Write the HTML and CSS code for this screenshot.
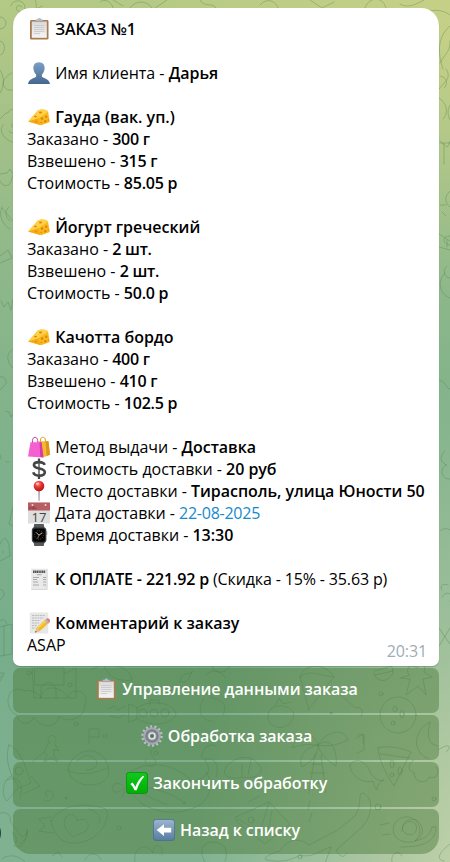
FILE: index.html
```html
<!DOCTYPE html>
<html lang="ru">
<head>
<meta charset="utf-8">
<title>Заказ №1</title>
<link rel="stylesheet" href="styles.css">
</head>
<body>
<svg class="defs" width="0" height="0" aria-hidden="true">
  <defs>
    <linearGradient id="gPaper" x1="0" y1="0" x2="0" y2="1"><stop offset="0" stop-color="#dadada"/><stop offset="1" stop-color="#f4f4f4"/></linearGradient>
    <linearGradient id="gUser" x1="0" y1="0" x2="0" y2="1"><stop offset="0" stop-color="#7ba0c4"/><stop offset="1" stop-color="#446790"/></linearGradient>
    <linearGradient id="gArrow" x1="0" y1="0" x2="0" y2="1"><stop offset="0" stop-color="#9db6cf"/><stop offset="1" stop-color="#577ba1"/></linearGradient>
    <linearGradient id="gCheck" x1="0" y1="0" x2="0" y2="1"><stop offset="0" stop-color="#10c91c"/><stop offset="1" stop-color="#00ae06"/></linearGradient>
    <radialGradient id="gPin" cx=".4" cy=".3" r=".7"><stop offset="0" stop-color="#ff8a80"/><stop offset=".5" stop-color="#e8322f"/><stop offset="1" stop-color="#b81414"/></radialGradient>
  </defs>
  <symbol id="clipboard" viewBox="0 0 22 22">
    <rect x="2" y="2" width="18.5" height="19.6" rx="1.4" fill="#a97c50"/>
    <path d="M3.8 3.5h15v16.300h-15z" fill="url(#gPaper)"/>
    <path d="M7 3.600l1-1.800h1.700a1.600 1.600 0 0 1 3.200 0h1.700l1 1.800z" fill="#b4bcc4" stroke="#8d969e" stroke-width=".4"/>
    <path d="M6 7.500h10.500M6 9.500h10.500M6 11.500h10.500M6 13.500h10.500M6 15.500h6" stroke="#c0c0c0" stroke-width=".7"/>
  </symbol>
  <symbol id="user" viewBox="0 0 22 22">
    <path d="M11 .3c4 0 5.800 2.800 5.600 6.200-.1 2.600-1.400 4.700-2.700 6v2.300c1.600 1.300 7.300 2 8.100 7.200H0c.8-5.200 6.500-5.900 8.100-7.200v-2.300C6.800 11.200 5.500 9.100 5.400 6.500 5.200 3.100 7 .3 11 .3z" fill="url(#gUser)"/>
  </symbol>
  <symbol id="cheese" viewBox="0 0 22 22">
    <path d="M.2 15.600 9.800 4.600c3-1.600 8.200-1.700 10.300 1.200l1.700 10.300-8.600 3.200z" fill="#f9b91c"/>
    <path d="M.2 15.600 9.800 4.600c3-1.600 8.200-1.700 10.300 1.200L10 12.500z" fill="#ffd048"/>
    <path d="M.2 15.600 10 12.500l2.200 6.600z" fill="#f6a912"/>
    <g fill="#dc850d"><ellipse cx="12.500" cy="6.500" rx="1.600" ry="1"/><ellipse cx="7.500" cy="10.600" rx="1.500" ry=".8"/><circle cx="14" cy="12.600" r="1.300"/><circle cx="18.200" cy="10.800" r="1.200"/><circle cx="17.300" cy="15.300" r="1.200"/><circle cx="20.300" cy="14" r=".7"/><circle cx="13.300" cy="16.500" r=".8"/><circle cx="8" cy="15.500" r=".8"/></g>
  </symbol>
  <symbol id="bags" viewBox="0 0 22 22">
    <path d="M12.500 8V4c0-3.600 4.500-3.600 5 0l.8 4" fill="none" stroke="#d9a01c" stroke-width="1"/>
    <path d="M10.500 5.200h10l1.500 13.500-5 2-6-1z" fill="#f5b92e"/><path d="M20.500 5.200 22 18.700l-3.300 1.400-1.200-14.900z" fill="#d9961b"/>
    <path d="M4.500 8V4.500C4.500.3 9.500.3 9.700 4.500V8" fill="none" stroke="#c43fa8" stroke-width="1"/>
    <path d="M2.500 6.200h11l2 15.200L0 20.500z" fill="#f65fd0"/><path d="m11.500 6.200 2 0 2 15.200-3.200-.3z" fill="#d53aa9"/>
  </symbol>
  <symbol id="dollar" viewBox="0 0 22 22">
    <path d="M11 .5v4M11 17.500V21" fill="none" stroke="#454545" stroke-width="2.300"/>
    <path d="M16.700 6.900C16 4.900 14 4.100 11 4.100c-3.200 0-5.100 1.100-5.100 3 0 4.700 10.900 2.300 10.900 7.100 0 2.200-2.200 3.400-5.600 3.400-3.200 0-5.400-1-5.900-3.300" fill="none" stroke="#454545" stroke-width="2.600"/>
    <path d="M11 4v14" stroke="#454545" stroke-width="1.300"/>
  </symbol>
  <symbol id="pin" viewBox="0 0 22 22">
    <path d="M10.300 9h1.500l-.3 12h-.9z" fill="#8d9298"/><circle cx="11" cy="6" r="5.300" fill="url(#gPin)"/><ellipse cx="9.500" cy="3.800" rx="1.700" ry="1.100" fill="#ffc1b8"/>
  </symbol>
  <symbol id="watch" viewBox="0 0 22 22">
    <path d="M6.300 0h9.400l1 5H5.300zM5.300 17h11.400l-1 5H6.300z" fill="#55595c"/>
    <rect x="3.800" y="3.300" width="14.600" height="15.600" rx="3.400" fill="#3c3f42"/><rect x="5" y="4.500" width="12.200" height="13.200" rx="2" fill="#050505"/>
    <circle cx="11" cy="11" r="4.300" fill="none" stroke="#777" stroke-width="1" stroke-dasharray=".6 1.600"/>
    <path d="m8.300 8.700 2.700 2.500 3.200-2.400" fill="none" stroke="#eee" stroke-width=".8"/><path d="m11 11.200-1.500 3.300" stroke="#f29232" stroke-width=".7"/><path d="M18.300 7.500h.9v3.500h-.9z" fill="#777"/>
  </symbol>
  <symbol id="receipt" viewBox="0 0 22 22">
    <path d="M3.200.700h16.300v20.800H3.200z" fill="#e9e9e9"/><path d="M19 1v20.500H3.200" fill="none" stroke="#d0d0d0" stroke-width=".8"/>
    <path d="M5 3.700h12.500" stroke="#555" stroke-width="2.400" stroke-dasharray="1.400 .4"/>
    <path d="M9 6.700h4.500M5 9.500h6M15 9.500h3M5 11.500h4M15 11.500h3M5 14h5M15 14h3M5 17h6M15 17h3" stroke="#999" stroke-width=".8"/>
  </symbol>
  <symbol id="memo" viewBox="0 0 22 22">
    <path d="M1.800.500h18.500v21H1.800z" fill="#e7e7e7"/>
    <path d="M4 3.500h13M4 6h11.500M4 8.500h8M4 11h7M4 13.500h5M4 16h3.500" stroke="#aaa" stroke-width=".7" stroke-dasharray="2 .7"/>
    <path d="m7.200 20.600 1.400-4.900 9.500-8.600 3 3.600-9.200 8.300z" fill="#f4ba29"/><path d="m7.200 20.600 1.400-4.900 3.300 3.300z" fill="#dfc495"/><path d="m7.200 20.600.5-1.700 1.200 1.200z" fill="#333"/>
    <path d="m16.700 8.400 1.400-1.300 3 3.600-1.400 1.200z" fill="#aeb7bd"/><path d="m18.100 7.100 1-.8c1.800-.4 3.700 1.700 2.900 3.500l-.9.900z" fill="#e9767e"/>
    <path d="m9.400 16.400 8.500-7.500" stroke="#ffe078" stroke-width="1"/>
  </symbol>
  <symbol id="gear" viewBox="0 0 22 22">
    <circle cx="11" cy="11" r="9.400" fill="none" stroke="#b9bdc6" stroke-width="2.800" stroke-dasharray="2 2.218"/>
    <circle cx="11" cy="11" r="6.500" fill="none" stroke="#a4a8b2" stroke-width="4.400"/>
    <circle cx="11" cy="11" r="5.600" fill="none" stroke="#7b7f8b" stroke-width="2.200"/>
    <circle cx="11" cy="11" r="3" fill="#777c82" stroke="#e2e4e8" stroke-width="1.700"/><circle cx="11" cy="11" r="1.500" fill="#62705a"/>
  </symbol>
  <symbol id="check" viewBox="0 0 22 22">
    <rect x=".4" y=".4" width="21.200" height="21.200" rx="3" fill="url(#gCheck)" stroke="#078c0c" stroke-width=".8"/>
    <path d="m4.300 12.100 2.200-1.600c1.200 1.200 2 2.700 2.800 4.500C11.200 10 13.600 6.600 17 3.700l1.200.8c-3.400 4-5.600 8.300-7.500 13.700H8.400c-.9-2.500-2.300-4.500-4.100-6.100z" fill="#fff"/>
  </symbol>
  <symbol id="back" viewBox="0 0 22 22">
    <rect x=".4" y=".4" width="21.200" height="21.200" rx="3" fill="url(#gArrow)" stroke="#486b90" stroke-width=".8"/>
    <path d="M3.700 11 11 5.200v3.600h7.200v4.600H11V17z" fill="#fff"/>
  </symbol>
</svg>

<svg class="wallpaper" viewBox="0 0 450 862" aria-hidden="true">
  <g class="doodles">
    <!-- top edge -->
    <path d="M22 7c-4-4-8 1-4 4s9-2 6-7-12-4-13 2M35 0c4 6-3 12 7 6M100 2c5-4 12 0 13 6M113 0l10 6M130 8c6-9 18-7 22 0M155 8l12-8M200 0c4 8 13 2 16 8M260 5c7-8 16-4 18 3M310 0l12 8 12-6M365 8c4-12 18-12 21 0M400 4c8 5 16 0 24-4M424 13c6-3 17-5 26 2"/>
    <!-- left edge -->
    <path d="M0 17a6 6 0 0 1 0 12M0 41c7 1 5 14 0 14M0 70c5 7 4 17 0 23M12 73c-12 5-12 19 2 17M0 119c3-2 5-7 8-6 3-7 9-2 7 2M3 125c-5 6 1 16 13 18M12 124v3M9 131c2 3 5 2 6 0M0 174l7-1 3-4 3 5M0 181c3 6 8 6 11 1l2-7M2 207c-4 9 1 18 8 22M2 208l11 13M9 207c-5 4-4 10 1 14M0 256l8-6 4 8-12 5M1 301l3 6 4-5 3 8 2-11M0 377a5 5 0 0 1 4 9l-4 4M13 349c-8 5-6 14 0 19M6 411l3 1 2 5 2-3M6 462h3M0 455l1 4M13 507l-4 17 4 2M0 544c4-8 7-7 9 2l1 10-10 5M3 551v2M0 589a5 5 0 0 1 2 9l-2 2M0 627l12-3v30l-12 2M4 626v30M0 621c3-3 8-1 6 4M0 673h4l-4 5"/>
    <!-- right edge -->
    <path d="M450 26c-12 10-13 25-7 43M440 63c8-13 10-12 10-22M440 76c8 1 8 9 4 12M439 89c6-8 13-11 7-20M439 98c8 5 10 15 4 21M450 105c-4 6-1 14 0 15M440 141c7 5 7 10 10 0M440 143h10M444 144v20M450 191c-8 7-3 14 0 16M440 205h6M442 212l4 4M439 234l11 7M450 236c-8 0-8 8 0 9M439 247l11 3M447 240v7M445 273c-8 7-6 22 5 25M447 266c-5 4-3 12 3 12M439 380c6 0 6 8 11 9M445 451c-6 5-5 12 2 14-8 2-6 15 3 14M440 531c2-3 8-3 10-1M442 597c5-8 13-2 8 4M439 628l11 16M450 628l-11 18M442 590c-3-5 2-7 6-5"/>
    <!-- castle and clouds -->
    <path d="M35 668h29v17H35zM64 674l12-6v30H34l-2-31M41 698v-8a7 7 0 0 1 15 0v8M25 691c-20-9-22 19-8 24 1 9 13 12 17 2 8 13 24 10 25-1 9 8 25 3 26-11 6-15-14-18-17-8-9-12-24-12-27 0-6-6-15-8-16-6zM0 681l4-6"/>
    <circle cx="29" cy="673" r="2"/><circle cx="70" cy="685" r="2"/>
    <path d="M91 670l15-8c11 6 23 3 26 18-15 2-25-4-28-15M182 676c5-4 12-2 10-5-3 9-7 13-12 11zM108 709l6-3 4 4 7-4M110 716l8 2 6-3 M129 704l8 3v12l-8 3zM137 708c11-9 37-6 39 6-3 12-29 13-39 4M150 705v-5h9v4"/>
    <circle cx="143" cy="713" r="4"/><circle cx="154" cy="713" r="4"/><circle cx="165" cy="713" r="4"/>
    <path d="M206 675c7-8 17-3 19 3M212 662c-3 12 15 14 18 3M204 698c-8 12-3 23 8 23M211 686v12c12 1 17 8 12 17"/>
    <!-- rocket, planet, astronaut -->
    <path d="M9 745c5 1 10 8 15 18l7 20-12 5-7-12c-5-12-6-22-3-31zM12 776c-10 2-11 21-5 25l11-13M7 780c12-5 17 3 13 19M31 776l9 10-17 8M32 762l12-10M44 752c4-4 2-10 6-9a4 4 0 1 1 4 0l5 8-5-2v7l4 6-7-4-7 4 3-7zM69 765c8-18 31-19 38-2s-7 22-18 22-23-8-20-20zM66 770c15 6 26 4 42-2M77 761c5-3 8-8 15-4 9 5 5 13-6 13M89 744v-15h10v8h-9"/>
    <circle cx="19" cy="771" r="4"/><circle cx="105" cy="736" r="2"/><circle cx="76" cy="724" r="2"/>
    <!-- octopus, whale, spiral -->
    <path d="M147 742c13-7 19 1 7 6-9 5 5 11 1 16-3 6-13 0-9-5M122 789c-7 8-14-1-7-5 6-3 13 5 7 13M128 774c15-13 44-14 65 8 11-5 22-8 11-23 13-2 15 8 12 18M134 795c7 15 43 25 67 9 11-8 11-24 5-32M145 787c14 2 26 7 37 14M143 794l24 11M202 758c-1-13 11-16 15-11"/>
    <circle cx="156" cy="753" r="2"/><circle cx="184" cy="803" r="1"/>
    <!-- heart balloon -->
    <path d="M51 821c14-22 43-16 55-12 5 9-5 25-17 31-19 7-33 3-38-19zM51 817l-12 2 6 7-6 5 14 2M89 809c9 3 13 9 10 14M66 817c7-6 12 1 11 4 8-5 15 2 9 10l-13 6c-9-8-11-14-7-20zM48 797c-5-3-1-9 4-5 4 5-2 12-8 8"/>
    <circle cx="66" cy="798" r="1"/><circle cx="119" cy="828" r="2"/>
    <path d="M0 813c8-2 12 4 10 8l12 16c6-2 6-10 5-5-1 12-7 17-13 14 4-6 3-9-2-14M20 844c8-7 8-9 7-15M52 856l6-4 4 5M2 859c7-6 18-3 23 3M85 860c4-8 13-8 16 0M135 862c-3-12 10-22 18-9 1-12 11-8 9 2M205 862c-6-9-4-20 8-20s16 10 12 19"/>
    <!-- umbrella, fruit, ball, figure -->
    <path d="M300 677c3-13 24-16 34 0l-26 33M300 677l9 33M300 677c9-8 17-2 34 0M334 690l22 18c5-2 8 3 5 8M271 709c10-8 26 0 22 9-5 15-26 10-25-1 0-4 1-6 3-8zM275 706l4-8 4 6 8-2M375 666c7-8 19-3 18 7-5 11-18 9-19 0M374 671l18-5M375 675l18-4M409 675c-5-8 3-12 8-7 4-7 10-1 7 4l8 5-9 2 3 16-8-9-12 9 4-16-9-1z"/>
    <circle cx="398" cy="715" r="18"/><ellipse cx="395" cy="709" rx="2" ry="3"/><ellipse cx="402" cy="714" rx="2" ry="4"/><circle cx="393" cy="723" r="2"/><circle cx="381" cy="694" r="2"/><circle cx="331" cy="713" r="1"/>
    <!-- palm, pizza, fish, candy -->
    <path d="M318 745c-4-15-20-13-26 3 13-5 20-3 26-3 10-8 20 0 18 21-8-5-15-10-18-21 8-14 25-18 30-5-11 5-20 7-30 5-9 1-21 10-16 22 11-6 16-12 16-22M315 754l-6 39M321 755l5 38M312 764h10M310 773h14M309 783h16M378 748c10-3 24 0 33 4l-17 34c-7-10-15-25-16-38zM380 754l29 4M350 765c7-10 18-1 20 7 4 6 8 10 14 8-5 2-7 6-7 10-3-2-3-7-4-9-10 3-23-5-23-16zM358 735c5-2 6-1 5 8M356 738l8-4v16l-7 3M430 722c-18 9-18 31-1 37M430 722c-3 11-3 23 8 24M438 750c12-8 14-3 8 2M414 760c-8 5-5 12 0 12 0 12 13 12 15 5 7 3 12-5 7-10M226 767c9-12 29-14 35 2 1 10-15 9-19 8-10 3-22 0-16-10zM242 764v12M251 760l-3 15"/>
    <ellipse cx="392" cy="764" rx="2" ry="4"/><ellipse cx="400" cy="771" rx="2" ry="4"/><circle cx="392" cy="775" r="2"/>
    <!-- envelope, crocodile, snail -->
    <path d="M236 817l33-15 21 22-25 20-28-22zM238 819l22 13 9-30M272 811l-5 25M248 802l12-6M309 845c-10-9-23-5-29 6-12 3-18 8-13 9 14 3 25 0 33-5 13 4 24-7 31-8l-6 16M309 845l27-14 19-15c8-12 2-23 8-23 12 6 9 24-2 35l-25 22c5 8 8 8 11 3M402 831c0-9 10-13 14-6 3 7-5 13-11 8-7-5 1-17 11-13 9 6 9 17-3 22-14 2-24-7-18-19 5-7 15-9 22-1 5 7 3 14-2 19 9-2 15-5 17-14h4c0 15-14 20-35 20M380 825l9-2M382 835l8-1M450 844c-12 9-14 16-6 17"/>
    <circle cx="251" cy="820" r="3"/><circle cx="378" cy="807" r="3"/><circle cx="434" cy="799" r="2"/><circle cx="300" cy="857" r="2"/><path d="M310 801l-2 9M312 813l-3 9M392 862c-2-10 8-12 10-6"/>
  </g>
  <ellipse class="edge-avatar" cx="-2" cy="833" rx="3" ry="7"/>
</svg>

<main class="chat">
  <article class="message">
    <section class="block"><p><svg class="emoji"><use href="#clipboard"/></svg> <b>ЗАКАЗ №1</b></p></section>
    <section class="block"><p><svg class="emoji"><use href="#user"/></svg> Имя клиента - <b>Дарья</b></p></section>
    <section class="block">
      <p><svg class="emoji"><use href="#cheese"/></svg> <b>Гауда (вак. уп.)</b></p>
      <p>Заказано - <b class="amount">300 г</b></p><p>Взвешено - <b class="amount">315 г</b></p><p>Стоимость - <b class="amount">85.05 р</b></p>
    </section>
    <section class="block">
      <p><svg class="emoji"><use href="#cheese"/></svg> <b>Йогурт греческий</b></p>
      <p>Заказано - <b class="amount">2 шт.</b></p><p>Взвешено - <b class="amount">2 шт.</b></p><p>Стоимость - <b class="amount">50.0 р</b></p>
    </section>
    <section class="block">
      <p><svg class="emoji"><use href="#cheese"/></svg> <b>Качотта бордо</b></p>
      <p>Заказано - <b class="amount">400 г</b></p><p>Взвешено - <b class="amount">410 г</b></p><p>Стоимость - <b class="amount">102.5 р</b></p>
    </section>
    <section class="block details">
      <p><svg class="emoji"><use href="#bags"/></svg> Метод выдачи - <b>Доставка</b></p>
      <p><svg class="emoji"><use href="#dollar"/></svg> Стоимость доставки - <b>20 руб</b></p>
      <p><svg class="emoji"><use href="#pin"/></svg> Место доставки - <b>Тирасполь, улица Юности 50</b></p>
      <p><svg class="emoji" viewBox="0 0 22 22">
        <path d="M0 .5h22v21H0z" fill="#dedede"/><path d="M0 .5h22v8H0z" fill="#b85d62"/>
        <g fill="#eed5d5"><circle cx="4.500" cy="3" r="1"/><circle cx="17.500" cy="3" r="1"/></g>
        <path d="M2 4.500v2.300H1M4 4.500v2.300h1.500V4.500M7 4.500v2.300h1.500" fill="none" stroke="#7e353a" stroke-width=".7"/>
        <text x="11" y="19.500" class="calendar-day">17</text>
      </svg> Дата доставки - <span class="date">22-08-2025</span></p>
      <p><svg class="emoji"><use href="#watch"/></svg> Время доставки - <b>13:30</b></p>
    </section>
    <section class="block total"><p><svg class="emoji"><use href="#receipt"/></svg> <b>К ОПЛАТЕ - 221.92 р</b> (Скидка - 15% - 35.63 р)</p></section>
    <section class="block">
      <p><svg class="emoji"><use href="#memo"/></svg> <b>Комментарий к заказу</b></p>
      <p class="last-line"><span>ASAP</span><time>20:31</time></p>
    </section>
  </article>
  <nav class="keyboard">
    <button><svg class="emoji"><use href="#clipboard"/></svg> Управление данными заказа</button>
    <button><svg class="emoji"><use href="#gear"/></svg> Обработка заказа</button>
    <button><svg class="emoji"><use href="#check"/></svg> Закончить обработку</button>
    <button><svg class="emoji"><use href="#back"/></svg> Назад к списку</button>
  </nav>
</main>
</body>
</html>
```
FILE: styles.css
```css
* { box-sizing: border-box; }

body {
  margin: 0;
  height: 862px;
  overflow: hidden;
  position: relative;
  font: 16px/22px "Open Sans", "Noto Sans", sans-serif;
  color: #000;
  background:
    radial-gradient(ellipse 290px 520px at 108% 104%, #c6d4ab 0%, rgba(198, 212, 171, 0) 100%),
    radial-gradient(ellipse 330px 270px at 100% 4%, rgba(226, 220, 136, .42) 0%, rgba(226, 220, 136, 0) 100%),
    linear-gradient(180deg, #b4c985 0, #a9c487 90px, #8fb88a 260px, #80b28b 430px, #78ad8c 650px, #80b292 862px);
}

.defs { position: absolute; }

.wallpaper {
  position: absolute;
  inset: 0;
  width: 450px;
  height: 862px;
}

.doodles {
  fill: none;
  stroke: #467c4d;
  stroke-opacity: .33;
  stroke-width: 1;
  stroke-linecap: round;
  stroke-linejoin: round;
}

.edge-avatar { fill: #24404e; }

.chat {
  position: relative;
  width: 426px;
  margin: 8px 0 0 13px;
}

.message {
  height: 658px;
  padding: 10px 12px 0 14px;
  background: #fff;
  border-radius: 18px 18px 7px 7px;
  box-shadow: 0 1px 1px rgba(60, 100, 70, .35);
}

.block { margin-bottom: 22px; }

p {
  margin: 0;
  height: 22px;
  white-space: nowrap;
}

b { font-weight: 600; }

.amount { letter-spacing: -.25px; }

.details { letter-spacing: -.03px; }

.total { letter-spacing: -.14px; }

.emoji {
  width: 22px;
  height: 22px;
  margin: 0 1px;
  vertical-align: top;
}

.calendar-day {
  font: 500 13px "Open Sans", sans-serif;
  letter-spacing: 0;
  fill: #444;
  text-anchor: middle;
}

.date {
  color: #168acd;
  font-weight: 500;
  letter-spacing: -.25px;
}

.last-line {
  display: flex;
  justify-content: space-between;
}

.last-line time {
  color: #a0acb6;
  padding-top: 6px;
  letter-spacing: -.1px;
}

.keyboard {
  display: grid;
  gap: 2px;
  margin-top: 2px;
}

.keyboard button {
  height: 45px;
  padding: 0 0 4px;
  border: 0;
  border-radius: 7px;
  background: rgba(78, 124, 60, .48);
  color: #fff;
  font: 600 16px/22px "Open Sans", "Noto Sans", sans-serif;
  letter-spacing: -.06px;
}

.keyboard button:last-child { border-radius: 7px 7px 18px 18px; }
```
